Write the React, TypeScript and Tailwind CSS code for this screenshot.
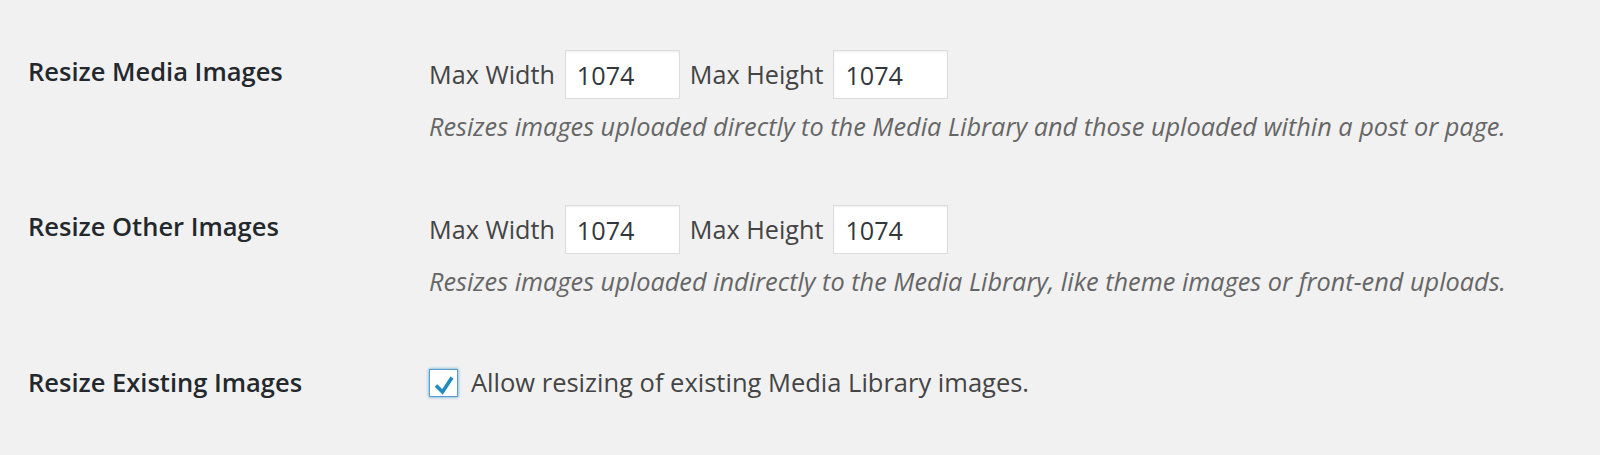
import { useState } from "react";

function SizeInput({ value }: { value: string }) {
    return (
        <input
            type="text"
            defaultValue={value}
            className="w-[115px] h-[49px] px-[11px] bg-white border border-[#dddddd] shadow-[inset_0_1px_2px_rgba(0,0,0,0.07)] text-[25.2px] text-[#32373c] outline-none"
        />
    );
}

function SizeRow({ label, desc }: { label: string; desc: string }) {
    return (
        <div className="flex">
            <div className="w-[429px] pl-[28px] pt-[4px] shrink-0">
                <h2 className="text-[25.5px] leading-[35px] font-semibold text-[#23282d]">{label}</h2>
            </div>
            <div className="flex-1">
                <div className="flex items-center h-[49px] text-[25.2px] text-[#444444]">
                    <span>Max Width</span>
                    <span className="ml-[10px]"><SizeInput value="1074" /></span>
                    <span className="ml-[10px]">Max Height</span>
                    <span className="ml-[10px]"><SizeInput value="1074" /></span>
                </div>
                <p className="mt-[10px] text-[25.3px] leading-[35px] italic text-[#666666]">{desc}</p>
            </div>
        </div>
    );
}

export default function App() {
    const [checked, setChecked] = useState(true);

    return (
        <div className="w-[1600px] h-[455px] bg-[#f1f1f1] pt-[50px] font-['Open_Sans',sans-serif]">
            <SizeRow
                label="Resize Media Images"
                desc="Resizes images uploaded directly to the Media Library and those uploaded within a post or page."
            />
            <div className="mt-[61px]">
                <SizeRow
                    label="Resize Other Images"
                    desc="Resizes images uploaded indirectly to the Media Library, like theme images or front-end uploads."
                />
            </div>
            <div className="flex mt-[66px]">
                <div className="w-[429px] pl-[28px] shrink-0">
                    <h2 className="text-[25.5px] leading-[35px] font-semibold text-[#23282d]">Resize Existing Images</h2>
                </div>
                <label className="flex items-center h-[35px] text-[25.5px] text-[#444444] cursor-pointer">
                    <button
                        type="button"
                        onClick={() => setChecked(!checked)}
                        className="w-[29px] h-[28px] bg-white border border-[#5b9dd9] shadow-[0_0_3px_rgba(30,140,190,0.8)] flex items-center justify-center"
                    >
                        {checked && (
                            <svg width="26" height="26" viewBox="0 0 26 26">
                                <path d="M5 15.5l6.5 6.5 9.5-14.5" fill="none" stroke="#1e8cbe" strokeWidth="3.6" />
                            </svg>
                        )}
                    </button>
                    <span className="ml-[13px]">Allow resizing of existing Media Library images.</span>
                </label>
            </div>
        </div>
    );
}
